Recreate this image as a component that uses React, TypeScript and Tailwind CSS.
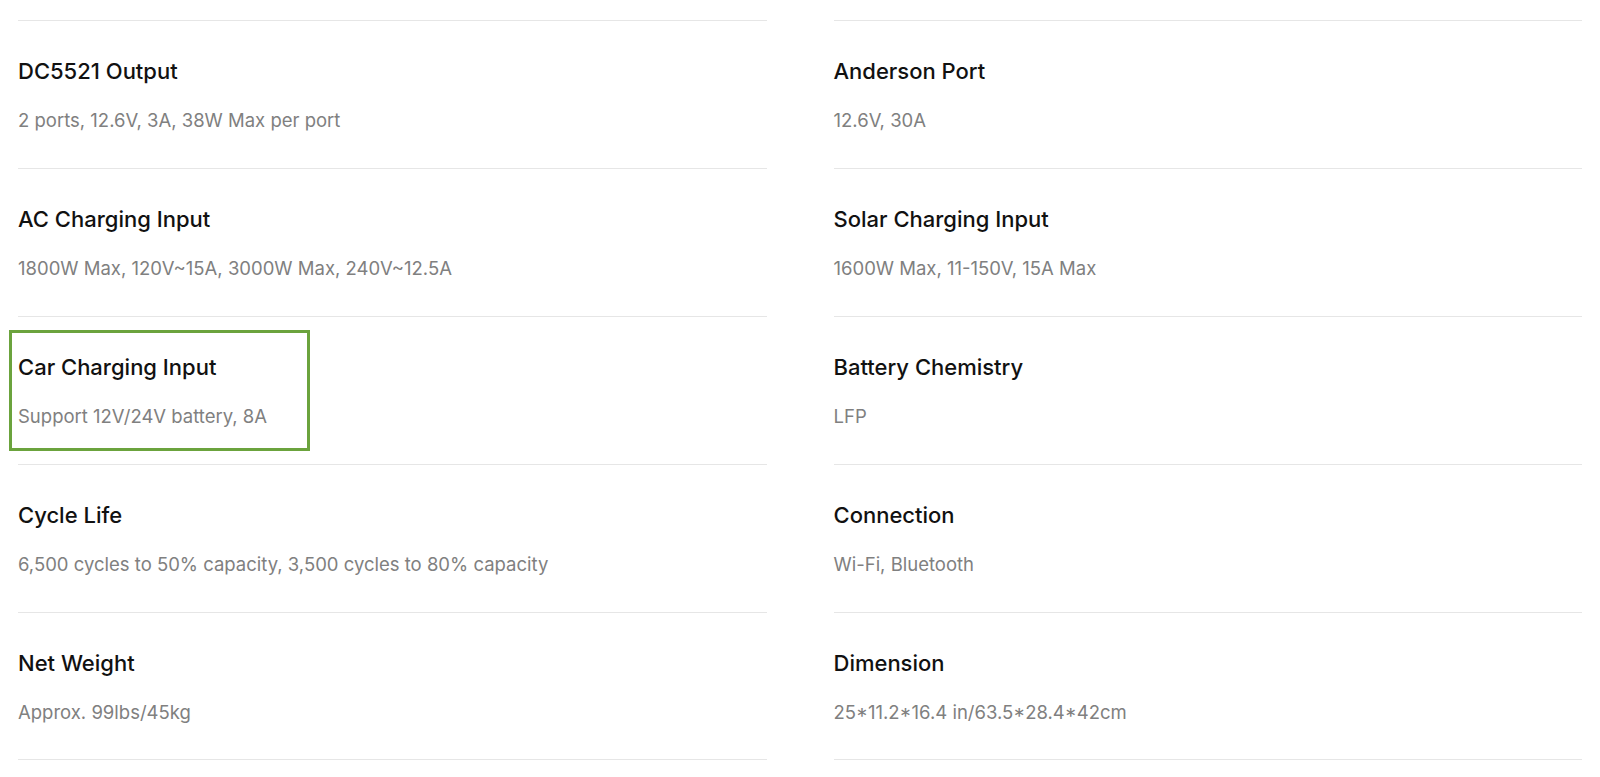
const specs = [
  { title: "DC5521 Output", value: "2 ports, 12.6V, 3A, 38W Max per port" },
  { title: "Anderson Port", value: "12.6V, 30A" },
  { title: "AC Charging Input", value: "1800W Max, 120V~15A, 3000W Max, 240V~12.5A" },
  { title: "Solar Charging Input", value: "1600W Max, 11-150V, 15A Max" },
  { title: "Car Charging Input", value: "Support 12V/24V battery, 8A", highlight: true },
  { title: "Battery Chemistry", value: "LFP" },
  { title: "Cycle Life", value: "6,500 cycles to 50% capacity, 3,500 cycles to 80% capacity" },
  { title: "Connection", value: "Wi-Fi, Bluetooth" },
  { title: "Net Weight", value: "Approx. 99lbs/45kg" },
  { title: "Dimension", value: "25*11.2*16.4 in/63.5*28.4*42cm" },
]

function SpecItem({ title, value, highlight, last }: { title: string; value: string; highlight?: boolean; last: boolean }) {
  return (
    <div className={`relative h-[148px] border-t border-[#e6e6e6] pt-[35px] ${last ? "border-b" : ""}`}>
      {highlight && (
        <div className="pointer-events-none absolute left-[-9px] top-[13px] h-[121px] w-[301px] border-[3px] border-[#6ba33d]" />
      )}
      <h3 className="text-[22px] leading-[30px] font-medium text-[#111]">{title}</h3>
      <p className="mt-[21px] text-[18.5px] leading-[26px] text-[#808080]">{value}</p>
    </div>
  )
}

export default function App() {
  return (
    <div className="min-h-screen bg-white px-[18px] pt-[20px]" style={{ fontFamily: "Inter, 'Noto Sans', sans-serif" }}>
      <div className="grid grid-cols-2 gap-x-[67px]">
        {specs.map((s, i) => (
          <SpecItem key={s.title} {...s} last={i >= specs.length - 2} />
        ))}
      </div>
    </div>
  )
}
